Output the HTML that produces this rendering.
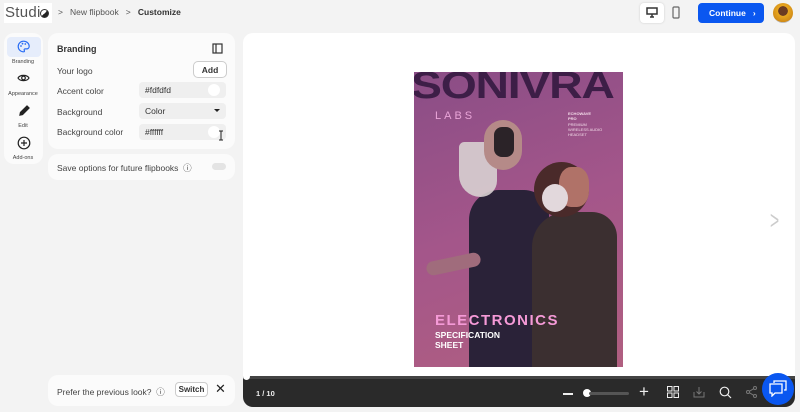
<!DOCTYPE html>
<html><head><meta charset="utf-8"><style>
*{box-sizing:border-box;margin:0;padding:0}
body{width:800px;height:412px;background:#f3f3f3;font-family:"Liberation Sans",sans-serif;position:relative;overflow:hidden;color:#333}
.abs{position:absolute}
.card{position:absolute;background:#fbfbfb;border-radius:10px}
.lbl{position:absolute;left:9px;font-size:8.5px;color:#444}
.fld{position:absolute;left:91px;width:87px;height:16px;background:#efefef;border-radius:4px;font-size:8.5px;color:#333;padding:3px 6px}
.knob{position:absolute;right:6px;top:2px;width:12px;height:12px;border-radius:50%;background:#fff}
.nav{position:absolute;left:0;width:38px;text-align:center;font-size:5.5px;color:#444}
</style></head><body>
<div class="abs" style="left:4px;top:3px;width:48px;height:20px;background:#fff"></div>
<div class="abs" style="left:5px;top:4px;font-size:15px;color:#555;letter-spacing:0.3px">Studi</div>
<div class="abs" style="left:40px;top:9px;width:9px;height:9px;border-radius:50%;border:1px solid #333;background:linear-gradient(135deg,#fff 50%,#222 50%)"></div>
<div class="abs" style="left:58px;top:7px;font-size:8.5px;color:#555">&gt;&nbsp;&nbsp;&nbsp;New flipbook&nbsp;&nbsp;&nbsp;&gt;&nbsp;&nbsp;&nbsp;<b style="color:#333">Customize</b></div>
<div class="abs" style="left:640px;top:3px;width:24px;height:20px;background:#fff;border-radius:4px;box-shadow:0 0 2px #ccc"></div>
<svg class="abs" style="left:646px;top:7px" width="12" height="11" viewBox="0 0 12 11"><rect x="1" y="1" width="10" height="6" fill="none" stroke="#333" stroke-width="1.5"/><path d="M6 7v3M4 10h4" stroke="#333" stroke-width="1.5"/></svg>
<svg class="abs" style="left:672px;top:6px" width="8" height="13" viewBox="0 0 8 13"><rect x="1" y="1" width="6" height="11" rx="1" fill="none" stroke="#666" stroke-width="1.2"/></svg>
<div class="abs" style="left:698px;top:3px;width:66px;height:20px;background:#0a57f0;border-radius:4px;color:#fff;font-size:8.5px;font-weight:bold;padding:5px 0 0 11px">Continue&nbsp;&nbsp;&nbsp;›</div>
<div class="abs" style="left:773px;top:3px;width:20px;height:20px;border-radius:50%;background:radial-gradient(circle at 50% 40%,#6b3b22 30%,#e9a820 32%,#d08a18 70%,#bbb 72%)"></div>

<div class="card" style="left:4px;top:33px;width:39px;height:131px"></div>
<div class="abs" style="left:7px;top:37px;width:34px;height:20px;background:#e6edfb;border-radius:4px"></div>
<svg class="abs" style="left:17px;top:40px" width="13" height="13" viewBox="0 0 13 13"><path d="M6.5 1.2a5.3 5.3 0 1 0 0 10.6c1 0 1.2-.8.8-1.4-.5-.7 0-1.5.8-1.5h1.5a2.6 2.6 0 0 0 2.6-2.6C12.2 3.4 9.7 1.2 6.5 1.2z" fill="none" stroke="#2a6df4" stroke-width="1.2"/><circle cx="4" cy="6" r=".9" fill="#2a6df4"/><circle cx="5.5" cy="3.7" r=".9" fill="#2a6df4"/><circle cx="8.3" cy="4" r=".9" fill="#2a6df4"/></svg>
<div class="nav" style="left:4px;top:59px">Branding</div>
<svg class="abs" style="left:17px;top:73px" width="13" height="10" viewBox="0 0 13 10"><path d="M1 5C3 1.5 10 1.5 12 5C10 8.5 3 8.5 1 5z" fill="none" stroke="#222" stroke-width="1.2"/><circle cx="6.5" cy="5" r="1.8" fill="none" stroke="#222" stroke-width="1.2"/></svg>
<div class="nav" style="left:4px;top:91px">Appearance</div>
<svg class="abs" style="left:18px;top:105px" width="12" height="12" viewBox="0 0 12 12"><path d="M2 10l.5-2.5L9 1l2 2-6.5 6.5z" fill="#222" stroke="#222" stroke-width="1.3"/></svg>
<div class="nav" style="left:4px;top:123px">Edit</div>
<svg class="abs" style="left:17px;top:136px" width="14" height="14" viewBox="0 0 14 14"><circle cx="7" cy="7" r="5.8" fill="none" stroke="#222" stroke-width="1.2"/><path d="M7 4v6M4 7h6" stroke="#222" stroke-width="1.2"/></svg>
<div class="nav" style="left:4px;top:155px">Add-ons</div>

<div class="card" style="left:48px;top:33px;width:187px;height:116px">
<div class="abs" style="left:9px;top:11px;font-size:9px;font-weight:bold;color:#333">Branding</div>
<svg class="abs" style="left:164px;top:10px" width="11" height="11" viewBox="0 0 11 11"><rect x="1" y="1" width="9" height="9" fill="none" stroke="#333" stroke-width="1.2"/><path d="M4 1v9" stroke="#333" stroke-width="1.2"/></svg>
<div class="lbl" style="top:33px">Your logo</div>
<div class="abs" style="left:145px;top:28px;width:34px;height:17px;background:#fff;border:1px solid #ccc;border-radius:5px;font-size:8.5px;font-weight:bold;text-align:center;padding-top:3px">Add</div>
<div class="lbl" style="top:53px">Accent color</div>
<div class="fld" style="top:49px">#fdfdfd<div class="knob"></div></div>
<div class="lbl" style="top:74px">Background</div>
<div class="fld" style="top:70px">Color<span style="position:absolute;right:6px;top:6px;border:3px solid transparent;border-top:3.5px solid #222"></span></div>
<div class="lbl" style="top:94px">Background color</div>
<div class="fld" style="top:91px">#ffffff<div class="knob"></div></div>
</div>
<div class="card" style="left:48px;top:154px;width:187px;height:26px">
<div class="lbl" style="top:8px">Save options for future flipbooks&nbsp;&nbsp;ⓘ</div>
<div class="abs" style="left:164px;top:9px;width:14px;height:7px;border-radius:4px;background:#e4e4e4"></div>
</div>
<div class="card" style="left:48px;top:375px;width:187px;height:31px">
<div class="lbl" style="top:11px">Prefer the previous look?&nbsp;&nbsp;ⓘ</div>
<div class="abs" style="left:127px;top:7px;width:33px;height:15px;background:#fff;border:1px solid #ccc;border-radius:4px;font-size:8px;font-weight:bold;text-align:center;padding-top:2px">Switch</div>
<div class="abs" style="left:167px;top:6px;font-size:13px;color:#222">✕</div>
</div>

<div class="abs" style="left:243px;top:33px;width:552px;height:374px;background:#fff;border-radius:10px;overflow:hidden">
<div class="abs" style="left:0;top:343px;width:552px;height:31px;background:#2a2a2a"></div>
<div class="abs" style="left:0;top:343px;width:552px;height:3px;background:#444"></div>
<div class="abs" style="left:13px;top:356px;font-size:7.5px;color:#eee;font-weight:bold">1 / 10</div>
<div class="abs" style="left:320px;top:360px;width:10px;height:1.5px;background:#eee"></div>
<div class="abs" style="left:340px;top:356px;width:8px;height:8px;border-radius:50%;background:#fff"></div>
<div class="abs" style="left:346px;top:359px;width:40px;height:3px;border-radius:2px;background:#555"></div>
<div class="abs" style="left:396px;top:349px;font-size:17px;color:#eee">+</div>
<svg class="abs" style="left:424px;top:353px" width="12" height="12" viewBox="0 0 12 12" fill="none" stroke="#eee"><rect x=".5" y=".5" width="4.5" height="4.5"/><rect x="7" y=".5" width="4.5" height="4.5"/><rect x=".5" y="7" width="4.5" height="4.5"/><rect x="7" y="7" width="4.5" height="4.5"/></svg>
<svg class="abs" style="left:450px;top:353px" width="12" height="12" viewBox="0 0 12 12" fill="none" stroke="#777"><path d="M1 6v5h10V6M6 1v7M3.5 5.5L6 8l2.5-2.5"/></svg>
<svg class="abs" style="left:476px;top:353px" width="13" height="13" viewBox="0 0 13 13" fill="none" stroke="#eee" stroke-width="1.2"><circle cx="5.5" cy="5.5" r="4.3"/><path d="M8.5 8.5L12 12"/></svg>
<svg class="abs" style="left:503px;top:353px" width="11" height="12" viewBox="0 0 11 12" fill="none" stroke="#777"><circle cx="9" cy="2" r="1.5"/><circle cx="2" cy="6" r="1.5"/><circle cx="9" cy="10" r="1.5"/><path d="M3.3 5.3l4.4-2.6M3.3 6.7l4.4 2.6"/></svg>
<div class="abs" style="left:519px;top:340px;width:32px;height:32px;border-radius:50%;background:#0a57f0"></div>
<svg class="abs" style="left:526px;top:347px" width="18" height="17" viewBox="0 0 18 17" fill="none" stroke="#fff" stroke-width="1.3"><path d="M5 3V1h12v9h-2"/><path d="M1 4h12v9H6l-3 3v-3H1z"/></svg>
<div class="abs" style="left:524px;top:172px;font-size:26px;color:#ccc;font-weight:100;transform:scaleX(.6)">&gt;</div>
<div class="abs" style="left:0;top:340px;width:7px;height:7px;border-radius:50%;background:#fff"></div>
</div>

<div class="abs" style="left:414px;top:72px;width:209px;height:295px;overflow:hidden;background:linear-gradient(160deg,#8a4d86 0%,#a4568a 50%,#b05f80 100%)">
<div class="abs" style="left:-3px;top:-7px;font-size:38px;font-weight:bold;color:#3d1e47;letter-spacing:-1px;transform:scaleX(1.22);transform-origin:left">SONIVRA</div>
<div class="abs" style="left:21px;top:38px;font-size:11px;color:#e9a5d8;letter-spacing:3px">LABS</div>
<div class="abs" style="left:154px;top:39px;font-size:4px;color:#f3dbe9;line-height:5.3px"><b>ECHOWAVE<br>PRO</b><br>PREMIUM<br>WIRELESS AUDIO<br>HEADSET</div>
<div class="abs" style="left:55px;top:118px;width:80px;height:190px;background:#2a2238;border-radius:30px 25px 0 0"></div>
<div class="abs" style="left:118px;top:140px;width:85px;height:160px;background:#3b2f30;border-radius:35px 25px 0 0"></div>
<div class="abs" style="left:45px;top:70px;width:38px;height:55px;background:#d8d0d2;border-radius:10px 20px 30px 40px;opacity:.9"></div>
<div class="abs" style="left:70px;top:48px;width:38px;height:50px;background:#b58a88;border-radius:20px"></div>
<div class="abs" style="left:80px;top:55px;width:20px;height:30px;background:#2b2328;border-radius:8px"></div>
<div class="abs" style="left:120px;top:90px;width:55px;height:55px;background:#4a2a2a;border-radius:50%"></div>
<div class="abs" style="left:145px;top:95px;width:30px;height:40px;background:#b07268;border-radius:40%"></div>
<div class="abs" style="left:128px;top:112px;width:26px;height:28px;background:#e2d8dc;border-radius:50%"></div>
<div class="abs" style="left:12px;top:185px;width:55px;height:14px;background:#a06c7c;border-radius:7px;transform:rotate(-12deg)"></div>
<div class="abs" style="left:21px;top:240px;font-size:15px;font-weight:bold;color:#f59ad7;letter-spacing:1.5px">ELECTRONICS</div>
<div class="abs" style="left:21px;top:258px;font-size:8.5px;font-weight:bold;color:#fff;line-height:10px">SPECIFICATION<br>SHEET</div>
</div>
<svg class="abs" style="left:217px;top:130px" width="8" height="11" viewBox="0 0 8 11"><path d="M2 1h4M4 1v9M2 10h4" stroke="#222"/></svg>
</body></html>
